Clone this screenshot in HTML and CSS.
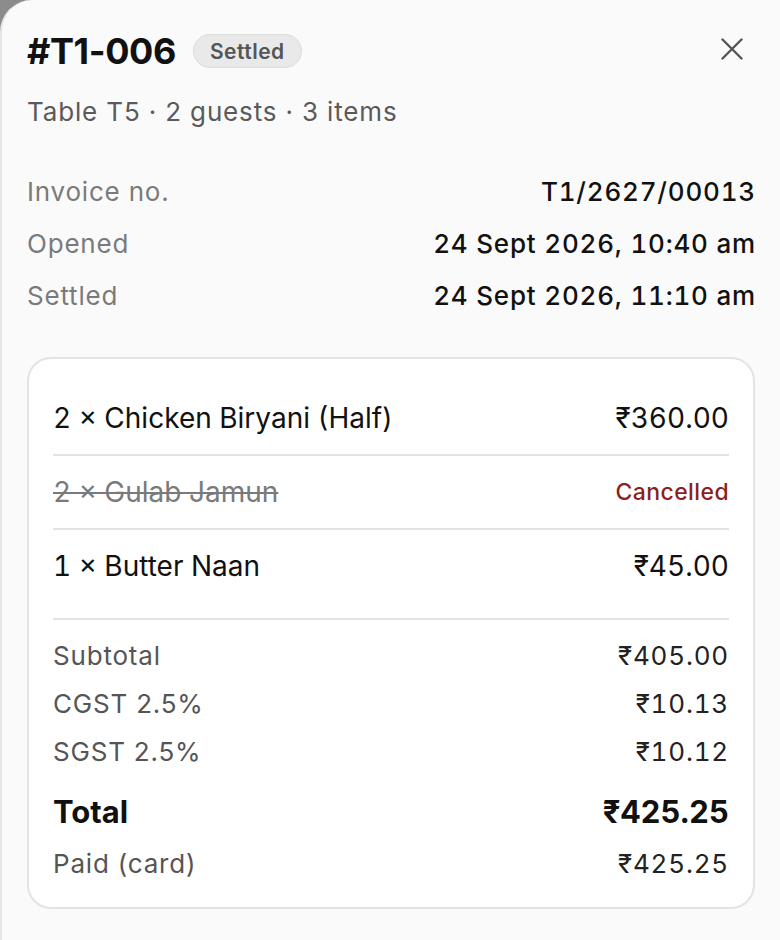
FILE: index.html
```html
<!DOCTYPE html>
<html lang="en">
<head>
<meta charset="utf-8">
<title>#T1-006</title>
<link rel="stylesheet" href="styles.css">
</head>
<body>
<div class="panel">
  <header class="head">
    <div class="title-row">
      <h1 class="title">#T1-006</h1>
      <span class="badge">Settled</span>
    </div>
    <button class="close" aria-label="Close">
      <svg width="22" height="22" viewBox="0 0 22 22" fill="none" stroke="#555" stroke-width="2.4" stroke-linecap="round"><path d="M1.5 1.5 L20.5 20.5 M20.5 1.5 L1.5 20.5"/></svg>
    </button>
  </header>
  <p class="sub">Table T5 · 2 guests · 3 items</p>

  <dl class="meta">
    <div class="meta-row"><dt>Invoice no.</dt><dd>T1/2627/00013</dd></div>
    <div class="meta-row"><dt>Opened</dt><dd>24 Sept 2026, 10:40 am</dd></div>
    <div class="meta-row"><dt>Settled</dt><dd>24 Sept 2026, 11:10 am</dd></div>
  </dl>

  <section class="card">
    <ul class="items">
      <li class="item"><span>2 × Chicken Biryani (Half)</span><span class="num">₹360.00</span></li>
      <li class="item cancelled"><span class="strike">2 × Gulab Jamun</span><span class="status">Cancelled</span></li>
      <li class="item"><span>1 × Butter Naan</span><span class="num">₹45.00</span></li>
    </ul>
    <div class="totals">
      <div class="trow"><span>Subtotal</span><span class="val">₹405.00</span></div>
      <div class="trow"><span>CGST 2.5%</span><span class="val">₹10.13</span></div>
      <div class="trow"><span>SGST 2.5%</span><span class="val">₹10.12</span></div>
      <div class="trow grand"><span>Total</span><span class="val">₹425.25</span></div>
      <div class="trow"><span>Paid (card)</span><span class="val">₹425.25</span></div>
    </div>
  </section>
</div>
</body>
</html>
```

FILE: styles.css
```css
* { box-sizing: border-box; }
html, body { height: 100%; }
body {
  margin: 0;
  background: #8c8c8c;
  font-family: Inter, "Noto Sans", "Liberation Sans", sans-serif;
  color: #111;
}
.panel {
  min-height: 100%;
  background: #fafafa;
  border-left: 2px solid #e6e6e6;
  border-top-left-radius: 32px;
  padding: 27px 25px 30px 25px;
}
.head {
  display: flex;
  align-items: center;
  justify-content: space-between;
  height: 48px;
}
.title-row {
  display: flex;
  align-items: center;
  gap: 17px;
}
.title {
  margin: 0;
  font-size: 36px;
  line-height: 48px;
  font-weight: 700;
  letter-spacing: -0.4px;
  color: #111;
}
.badge {
  display: inline-flex;
  align-items: center;
  height: 34px;
  padding: 0 16px;
  border-radius: 17px;
  background: #e9e9e9;
  border: 1.5px solid #dcdcdc;
  color: #555;
  font-size: 21px;
  font-weight: 600;
  letter-spacing: 0.5px;
}
.close {
  border: 0;
  background: none;
  padding: 0;
  margin: 0 12px 5px 0;
  width: 22px;
  height: 22px;
  display: flex;
}
.sub {
  margin: 21px 0 0;
  font-size: 26px;
  line-height: 32px;
  color: #5a5a5a;
  letter-spacing: 0.85px;
}
.meta {
  margin: 48px 0 0;
  display: flex;
  flex-direction: column;
  gap: 20px;
}
.meta-row {
  display: flex;
  justify-content: space-between;
  font-size: 26px;
  line-height: 32px;
  letter-spacing: 0.8px;
}
.meta dt { color: #7a7a7a; }
.meta dd {
  margin: 0 -1px 0 0;
  color: #111;
  font-weight: 500;
  font-variant-numeric: tabular-nums;
}

.card {
  margin-top: 45px;
  background: #fff;
  border: 2px solid #e3e3e3;
  border-radius: 24px;
  padding: 23px 24px 27px 24px;
}
.items {
  list-style: none;
  margin: 0;
  padding: 0;
}
.item {
  display: flex;
  justify-content: space-between;
  align-items: center;
  padding: 21px 0 20px;
  font-size: 28px;
  line-height: 31px;
  color: #111;
  font-variant-numeric: tabular-nums;
  border-bottom: 2px solid #e3e3e3;
}
.item:last-child { border-bottom: 0; padding-bottom: 18px; }
.strike {
  color: #7a7a7a;
  text-decoration: line-through;
  text-decoration-thickness: 2px;
}
.status {
  color: #8c1f1b;
  font-size: 23px;
  font-weight: 500;
  letter-spacing: 0.4px;
}
.totals {
  margin-top: 18px;
  border-top: 2px solid #e3e3e3;
  padding-top: 20px;
  display: flex;
  flex-direction: column;
  gap: 16px;
}
.trow {
  display: flex;
  justify-content: space-between;
  font-size: 26px;
  line-height: 32px;
  color: #555;
  letter-spacing: 0.8px;
}
.trow .val { color: #222; font-variant-numeric: tabular-nums; }
.trow.grand {
  margin-top: 8px;
  font-size: 31px;
  line-height: 40px;
  font-weight: 700;
  color: #111;
  letter-spacing: 0;
}
.trow.grand .val { color: #111; }
```
